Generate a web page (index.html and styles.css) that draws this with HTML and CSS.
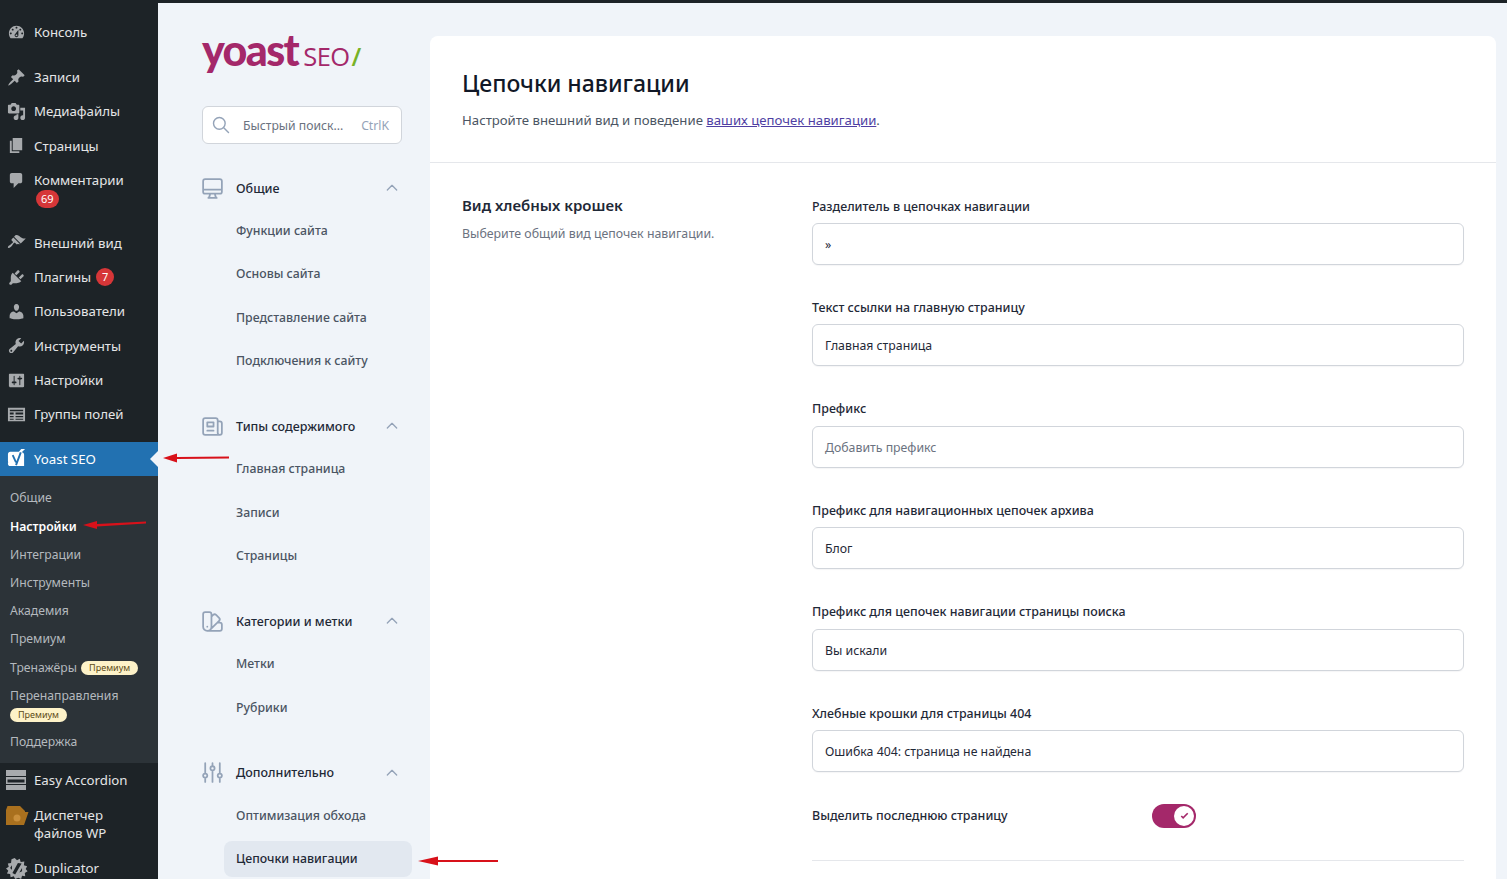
FILE: index.html
```html
<!DOCTYPE html>
<html lang="ru">
<head>
<meta charset="utf-8">
<title>Цепочки навигации</title>
<link rel="stylesheet" href="styles.css">
</head>
<body>
<div class="app">
  <aside class="wp">
    <ul class="wp-menu first">
      <li class="wp-item"><svg class="di" viewBox="0 0 20 20"><path d="M3.76 16h12.48c1.1-1.37 1.76-3.11 1.76-5 0-4.42-3.58-8-8-8s-8 3.58-8 8c0 1.89.66 3.63 1.76 5zM10 4c.55 0 1 .45 1 1s-.45 1-1 1-1-.45-1-1 .45-1 1-1zM6 6c.55 0 1 .45 1 1s-.45 1-1 1-1-.45-1-1 .45-1 1-1zm8 0c.55 0 1 .45 1 1s-.45 1-1 1-1-.45-1-1 .45-1 1-1zm-5.37 5.55L12 7v6c0 1.1-.9 2-2 2s-2-.9-2-2c0-.57.24-1.08.63-1.45zM4 10c.55 0 1 .45 1 1s-.45 1-1 1-1-.45-1-1 .45-1 1-1zm12 0c.55 0 1 .45 1 1s-.45 1-1 1-1-.45-1-1 .45-1 1-1zm-5 3c0-.55-.45-1-1-1s-1 .45-1 1 .45 1 1 1 1-.45 1-1z"/></svg><span>Консоль</span></li>
    </ul>
    <ul class="wp-menu gap">
      <li class="wp-item"><svg class="di" viewBox="0 0 20 20"><path d="M10.44 3.02l1.82-1.82 6.36 6.35-1.83 1.82c-1.05-.68-2.48-.57-3.41.36l-.75.75c-.92.93-1.04 2.35-.35 3.41l-1.83 1.82-2.41-2.41-2.8 2.79c-.42.42-3.38 2.71-3.8 2.29s1.86-3.39 2.28-3.81l2.79-2.79L4.1 9.36l1.83-1.82c1.05.69 2.48.57 3.4-.36l.75-.75c.93-.92 1.05-2.35.36-3.41z"/></svg><span>Записи</span></li>
      <li class="wp-item"><svg class="di" viewBox="0 0 20 20"><path d="M13 11V4c0-.55-.45-1-1-1h-1.67L9 1H5L3.67 3H2c-.55 0-1 .45-1 1v7c0 .55.45 1 1 1h10c.55 0 1-.45 1-1zM7 4.500c1.380 0 2.500 1.120 2.500 2.500S8.380 9.500 7 9.500 4.500 8.380 4.500 7 5.620 4.500 7 4.500zM14 6h5v10.500c0 1.380-1.120 2.500-2.500 2.500S14 17.880 14 16.500s1.120-2.500 2.500-2.500c.17 0 .34.02.5.05V9h-3V6zm-4 8.050V13h2v3.500c0 1.380-1.120 2.500-2.500 2.500S7 17.880 7 16.500 8.120 14 9.500 14c.17 0 .34.02.5.05z"/></svg><span>Медиафайлы</span></li>
      <li class="wp-item"><svg class="di" viewBox="0 0 20 20"><path d="M6 15V2h10v13H6zm-1 1h8v2H3V5h2v11z"/></svg><span>Страницы</span></li>
      <li class="wp-item tall"><svg class="di" viewBox="0 0 20 20"><path d="M5 2h9c1.100 0 2 .9 2 2v7c0 1.100-.9 2-2 2h-2l-5 5v-5H5c-1.100 0-2-.9-2-2V4c0-1.100.9-2 2-2z"/></svg><span class="stack"><span>Комментарии</span><span class="count">69</span></span></li>
    </ul>
    <ul class="wp-menu gap2">
      <li class="wp-item"><svg class="di" viewBox="0 0 20 20"><path d="M14.480 11.060L7.410 3.990l1.500-1.500c.5-.56 2.300-.47 3.510.32 1.210.8 1.430 1.280 2.910 2.100 1.180.64 2.450 1.260 4.450.85zm-.71.71L6.700 4.700 4.930 6.470c-.39.39-.39 1.020 0 1.410l1.060 1.060c.39.39.39 1.030 0 1.420-.6.6-1.430 1.110-2.210 1.690-.35.26-.7.53-1.010.84C1.430 13.230.5 15 1.060 15.560c.56.56 2.330-.37 3.680-1.710.3-.31.58-.66.84-1.010.58-.78 1.090-1.610 1.690-2.210.39-.39 1.030-.39 1.420 0l1.060 1.060c.39.39 1.020.39 1.410 0z"/></svg><span>Внешний вид</span></li>
      <li class="wp-item"><svg class="di" viewBox="0 0 20 20"><path d="M13.110 4.360L9.870 7.600 8 5.730l3.240-3.240c.35-.34 1.050-.2 1.560.32.52.51.66 1.210.31 1.550zm-8 1.770l.91-1.120 9.010 9.010-1.190.84c-.71.71-2.630 1.160-3.820 1.160H6.140L4.900 17.260c-.59.59-1.540.59-2.120 0-.59-.58-.59-1.530 0-2.120l1.240-1.240v-3.880c0-1.130.4-3.190 1.090-3.890zm7.260 3.970l3.240-3.240c.34-.35 1.040-.21 1.550.31.52.51.66 1.210.31 1.550l-3.240 3.250z"/></svg><span>Плагины</span><span class="count inline">7</span></li>
      <li class="wp-item"><svg class="di" viewBox="0 0 20 20"><path d="M10 9.250c-2.270 0-2.730-3.440-2.730-3.440C7 4.020 7.820 2 9.970 2c2.160 0 2.980 2.020 2.710 3.810 0 0-.41 3.440-2.680 3.440zm0 2.570L12.720 10c2.390 0 4.520 2.330 4.520 4.530v2.490s-3.650 1.130-7.240 1.130c-3.650 0-7.240-1.130-7.240-1.130v-2.490c0-2.250 1.940-4.480 4.470-4.480z"/></svg><span>Пользователи</span></li>
      <li class="wp-item"><svg class="di" viewBox="0 0 20 20"><path d="M16.680 9.770c-1.340 1.340-3.300 1.670-4.950.99l-5.410 6.520c-.99.99-2.590.99-3.580 0s-.99-2.590 0-3.570l6.520-5.420c-.68-1.650-.35-3.610.99-4.950 1.280-1.280 3.120-1.620 4.720-1.060l-2.890 2.890 2.820 2.820 2.860-2.870c.53 1.580.18 3.390-1.080 4.650zM3.810 16.210c.4.39 1.040.39 1.430 0 .4-.4.4-1.040 0-1.430-.39-.4-1.030-.4-1.430 0-.39.39-.39 1.030 0 1.430z"/></svg><span>Инструменты</span></li>
      <li class="wp-item"><svg class="di" viewBox="0 0 20 20"><path d="M18 16V4c0-.55-.45-1-1-1H3c-.55 0-1 .45-1 1v12c0 .55.45 1 1 1h14c.55 0 1-.45 1-1zM8 11h1c.55 0 1 .45 1 1s-.45 1-1 1H8v1.500c0 .28-.22.5-.5.5s-.5-.22-.5-.5V13H6c-.55 0-1-.45-1-1s.45-1 1-1h1V5.500c0-.28.22-.5.5-.5s.5.22.5.5V11zm5-2h-1c-.55 0-1-.45-1-1s.45-1 1-1h1V5.500c0-.28.22-.5.5-.5s.5.22.5.5V7h1c.55 0 1 .45 1 1s-.45 1-1 1h-1v5.500c0 .28-.22.5-.5.5s-.5-.22-.5-.5V9z"/></svg><span>Настройки</span></li>
      <li class="wp-item"><svg class="di" viewBox="0 0 20 20"><path fill-rule="evenodd" d="M1 3h18v14H1zM3 5v1.500h14V5zM3 8v2h4V8zm6 0v2h8V8zM3 11.500v1.500h4v-1.500zm6 0v1.500h8v-1.500zM3 14.500V15.500h4v-1zm6 0V15.500h8v-1z"/></svg><span>Группы полей</span></li>
    </ul>
    <div class="wp-active">
      <svg class="di" viewBox="0 0 20 20"><path class="y-bg" d="M3.500 3H12.500L15 0h4L15.500 3.500c1.500.3 2.500 1.200 2.500 2.500V18H8l2-3H3.500C2 15 1 14 1 12.500V5.500C1 4 2 3 3.500 3z"/><path class="y-bg" d="M3 14h10v4H3.500C2 18 1 17 1 15.500V14z"/><path class="y-mark" d="M6 6.500 9.500 14M14.500 3.500 9.500 17"/></svg>
      <span>Yoast SEO</span>
      <i class="notch"></i>
    </div>
    <ul class="wp-sub">
      <li>Общие</li>
      <li class="cur">Настройки</li>
      <li>Интеграции</li>
      <li>Инструменты</li>
      <li>Академия</li>
      <li>Премиум</li>
      <li>Тренажёры <span class="prem">Премиум</span></li>
      <li class="two">Перенаправления<br><span class="prem">Премиум</span></li>
      <li>Поддержка</li>
    </ul>
    <ul class="wp-menu">
      <li class="wp-item"><svg class="di big" viewBox="-1 0 24 20"><path fill-rule="evenodd" d="M0 0h20v6H0zM0 7h20v7H0zM1.500 9.500v3h17v-3zM0 15h20v5H0z"/></svg><span>Easy Accordion</span></li>
      <li class="wp-item files"><svg class="di big" viewBox="0 0 24 20"><path fill="#a9701e" d="M1 4 2.500 0h12.500l5 5v1h3.500L19 19H1z"/><circle cx="12" cy="12" r="3.500" fill="#c98f3c"/></svg><span>Диспетчер<br>файлов WP</span></li>
      <li class="wp-item"><svg class="di big dup" viewBox="0 0 24 24"><path d="M9.500 1 12 3.500 15 2l1 3.500 4-.5-.5 4 3.500 1-1.500 3 2 2.500-3 2 .5 3.500-3.500-.5-1 3.500-3-1.500L10 24l-1.500-3-3.500 1-.5-3.500L1 18l1.500-3L0 12.500 3 10.500 2 7l3.500-.5L6 2.500zM13 6.500 7 17.500l3 1.500 7-12zM6.500 9 4.500 12l2 2zm11 3-3 5 3-1.500z"/></svg><span>Duplicator</span></li>
    </ul>
  </aside>

  <nav class="side">
    <div class="logo"><span class="logo-y">yoast</span><span class="logo-s">SEO</span><span class="logo-g">/</span></div>
    <div class="search">
      <svg class="ic search-ic" viewBox="0 0 24 24"><path d="M21 21l-6-6m2-5a7 7 0 11-14 0 7 7 0 0114 0z"/></svg>
      <span class="search-t">Быстрый поиск...</span>
      <span class="search-k">CtrlK</span>
    </div>

    <section class="grp">
      <h3 class="grp-h"><svg class="ic" viewBox="0 0 24 24"><path d="M9.750 17L9 20l-1 1h8l-1-1-.75-3M3 13h18M5 17h14a2 2 0 002-2V5a2 2 0 00-2-2H5a2 2 0 00-2 2v10a2 2 0 002 2z"/></svg><span>Общие</span><svg class="chev" viewBox="0 0 24 24"><path d="M5 15l7-7 7 7"/></svg></h3>
      <ul class="grp-l"><li>Функции сайта</li><li>Основы сайта</li><li>Представление сайта</li><li>Подключения к сайту</li></ul>
    </section>
    <section class="grp">
      <h3 class="grp-h"><svg class="ic" viewBox="0 0 24 24"><path d="M19 20H5a2 2 0 01-2-2V6a2 2 0 012-2h10a2 2 0 012 2v1m2 13a2 2 0 01-2-2V7m2 13a2 2 0 002-2V9a2 2 0 00-2-2h-2m-4-3H9M7 16h6M7 8h6v4H7V8z"/></svg><span>Типы содержимого</span><svg class="chev" viewBox="0 0 24 24"><path d="M5 15l7-7 7 7"/></svg></h3>
      <ul class="grp-l"><li>Главная страница</li><li>Записи</li><li>Страницы</li></ul>
    </section>
    <section class="grp">
      <h3 class="grp-h"><svg class="ic" viewBox="0 0 24 24"><path d="M7 21a4 4 0 01-4-4V5a2 2 0 012-2h4a2 2 0 012 2v12a4 4 0 01-4 4zm0 0h12a2 2 0 002-2v-4a2 2 0 00-2-2h-2.343M11 7.343l1.657-1.657a2 2 0 012.828 0l2.829 2.829a2 2 0 010 2.828l-8.486 8.485M7 17h.01"/></svg><span>Категории и метки</span><svg class="chev" viewBox="0 0 24 24"><path d="M5 15l7-7 7 7"/></svg></h3>
      <ul class="grp-l"><li>Метки</li><li>Рубрики</li></ul>
    </section>
    <section class="grp">
      <h3 class="grp-h"><svg class="ic" viewBox="0 0 24 24"><path d="M12 6V3m0 3a2 2 0 100 4m0-4a2 2 0 110 4m-7 7a2 2 0 100-4m0 4a2 2 0 110-4m0 4v4m0-8V3m7 7v11m7-4a2 2 0 100-4m0 4a2 2 0 110-4m0 4v4m0-8V3"/></svg><span>Дополнительно</span><svg class="chev" viewBox="0 0 24 24"><path d="M5 15l7-7 7 7"/></svg></h3>
      <ul class="grp-l"><li>Оптимизация обхода</li><li class="on">Цепочки навигации</li></ul>
    </section>
  </nav>

  <main class="card">
    <header class="card-h">
      <h1>Цепочки навигации</h1>
      <p>Настройте внешний вид и поведение <a href="#">ваших цепочек навигации</a>.</p>
    </header>
    <section class="body">
      <div class="intro">
        <h2>Вид хлебных крошек</h2>
        <p>Выберите общий вид цепочек навигации.</p>
      </div>
      <div class="form">
        <div class="field"><label>Разделитель в цепочках навигации</label><div class="input sep">»</div></div>
        <div class="field"><label>Текст ссылки на главную страницу</label><div class="input">Главная страница</div></div>
        <div class="field"><label>Префикс</label><div class="input ph">Добавить префикс</div></div>
        <div class="field"><label>Префикс для навигационных цепочек архива</label><div class="input">Блог</div></div>
        <div class="field"><label>Префикс для цепочек навигации страницы поиска</label><div class="input">Вы искали</div></div>
        <div class="field"><label>Хлебные крошки для страницы 404</label><div class="input">Ошибка 404: страница не найдена</div></div>
        <div class="toggle-row">
          <label>Выделить последнюю страницу</label>
          <span class="toggle"><span class="knob"><svg viewBox="0 0 24 24"><path d="M5 13l4 4L19 7"/></svg></span></span>
        </div>
        <hr class="rule">
      </div>
    </section>
  </main>

  <svg class="arrow a1" viewBox="0 0 66 12"><path d="M0 6 14 1.500V5L66 4.500V6.500L14 7V10.500z"/></svg>
  <svg class="arrow a2" viewBox="0 0 63 12"><path d="M0 7 14 3V6L63 3.500V5.500L14 8.500V11z"/></svg>
  <svg class="arrow a3" viewBox="0 0 80 12"><path d="M0 6 20 1.500V5H80V7H20V10.500z"/></svg>
</div>
</body>
</html>
```
FILE: styles.css
```css
* { box-sizing: border-box; }
html, body { margin: 0; padding: 0; height: 879px; overflow: hidden; }
body { font-family: "Noto Sans", "Open Sans", sans-serif; background: #f0f4f9; color: #1f2937; }
ul { list-style: none; margin: 0; padding: 0; }
h1, h2, h3, p { margin: 0; }

.app { position: relative; display: flex; height: 879px; overflow: hidden; border-top: 3px solid #1d2327; }

/* WordPress menu */
.wp { width: 158px; flex: none; background: #1d2327; color: #e4e5e6; font-size: 13.25px; line-height: 18px; overflow: hidden; }
.wp-menu.first { padding-top: 12px; }
.wp-menu.gap { margin-top: 11px; }
.wp-menu.gap2 { margin-top: 1px; }
.wp-item { display: flex; align-items: center; height: 34.2px; padding-left: 7px; gap: 8px; }
.gap2 .wp-item { height: 34.3px; }
.wp-item.tall { height: 62px; align-items: flex-start; padding-top: 8px; }
.wp-item.files { height: 53.5px; align-items: flex-start; padding-top: 9px; }
.di { width: 19px; height: 19px; flex: none; fill: #a7aaad; }
.y-bg { fill: #fff; }
.y-mark { fill: none; stroke: #2271b1; stroke-width: 2; }
.di.big { width: 24px; height: 20px; margin-left: -2px; margin-right: -3px; }
.di.big.dup { height: 22px; }
.stack { display: flex; flex-direction: column; align-items: flex-start; }
.count { display: inline-block; min-width: 22px; height: 18px; margin-top: 1px; padding: 0 5px; margin-left: 2px; border-radius: 9px; background: #d63638; color: #fff; font-size: 11px; line-height: 18px; text-align: center; }
.count.inline { min-width: 18px; padding: 0; margin: 0 0 0 -3px; }
.wp-active { position: relative; display: flex; align-items: center; gap: 8px; height: 34px; margin-top: 10.4px; padding-left: 7px; background: #2271b1; color: #fff; }
.notch { position: absolute; right: 0; top: 9px; width: 0; height: 0; border: 8px solid transparent; border-right-color: #f0f4f9; border-left: 0; }
.wp-sub { background: #2c3338; color: #b4b9be; font-size: 12.2px; padding: 8.5px 0 0 10px; height: 287px; }
.wp-sub li { min-height: 28.2px; line-height: 28px; white-space: nowrap; }
.wp-sub li.cur { color: #fff; font-weight: 600; }
.wp-sub li.two { line-height: 19px; min-height: 46px; padding-top: 4px; }
.prem { display: inline-block; height: 14px; margin-left: 1px; padding: 0 8px; border-radius: 7px; background: #fdf2c8; color: #5c4a16; font-size: 9px; line-height: 14px; vertical-align: 1px; }
.two .prem { margin-left: 0; }

/* Yoast sub nav */
.side { width: 272px; flex: none; padding: 24px 18px 0 44px; font-size: 12.3px; }
.logo { display: flex; align-items: baseline; height: 54px; white-space: nowrap; }
.logo-y { font-family: Lato, sans-serif; font-weight: 900; font-size: 43px; line-height: 45px; letter-spacing: -1.6px; color: #a4286a; }
.logo-s { margin-left: 5px; font-family: "Open Sans", sans-serif; font-size: 25.5px; letter-spacing: -.6px; color: #a4286a; }
.logo-g { margin-left: 2px; font-family: "Open Sans", sans-serif; font-size: 25px; font-weight: 600; color: #77b227; }
.search { display: flex; align-items: center; width: 200px; height: 38px; margin-top: 25px; padding: 0 12px 0 8px; background: #fff; border: 1px solid #d1d5db; border-radius: 6px; color: #6b7280; font-size: 12.2px; }
.ic.search-ic { width: 20px; height: 20px; margin: 0; }
.search-t { margin-left: 12px; flex: 1; }
.search-k { color: #94a3b8; }
.ic { width: 25px; height: 25px; flex: none; margin: 0 -2.5px; fill: none; stroke: #94a3b8; stroke-width: 1.7; stroke-linecap: round; stroke-linejoin: round; }
.grp-h { display: flex; align-items: center; width: 200px; height: 34px; margin-top: 30.2px; font-size: 12.5px; font-weight: 500; color: #1f2937; }
.grp:first-of-type .grp-h { margin-top: 27px; }
.grp-h span { margin-left: 14px; flex: 1; }
.chev { width: 16px; height: 16px; margin-right: 2px; fill: none; stroke: #94a3b8; stroke-width: 2; stroke-linecap: round; stroke-linejoin: round; }
.grp-l { margin: 7.8px 0 0 22px; width: 188px; color: #4b5563; font-weight: 500; }
.grp-l li { height: 36px; line-height: 36px; padding-left: 12px; border-radius: 8px; margin-bottom: 7.5px; }
.grp-l li:last-child { margin-bottom: 0; }
.grp-l li.on { background: #e2e8f0; color: #1f2937; }

/* Main card */
.card { width: 1066px; flex: none; margin-top: 33px; background: #fff; border-radius: 8px 8px 0 0; }
.card-h { height: 127px; padding: 31px 32px 0; border-bottom: 1px solid #e5e7eb; }
.card-h h1 { font-size: 23px; line-height: 32px; font-weight: 500; color: #111827; }
.card-h p { margin-top: 11px; font-size: 13.2px; line-height: 20px; color: #4b5563; }
.card-h a { color: #4f3fa3; }
.body { display: flex; padding: 32px 32px 0; }
.intro { width: 350px; flex: none; }
.intro h2 { margin-top: -1px; font-size: 15px; line-height: 22px; font-weight: 600; color: #1f2937; }
.intro p { margin-top: 8px; font-size: 12.35px; line-height: 20px; color: #6b7280; }
.form { flex: 1; }
.field { height: 101.45px; }
label { display: block; padding-top: 1.5px; font-size: 12.45px; line-height: 20px; font-weight: 500; color: #1f2937; }
.input { height: 42px; margin-top: 6.5px; padding: 0 12px; border: 1px solid #d1d5db; border-radius: 6px; background: #fff; font-size: 12.3px; line-height: 41px; color: #1f2937; box-shadow: 0 1px 1px rgba(15,23,42,.04); }
.input.ph { color: #6b7280; }
.toggle-row { display: flex; align-items: center; height: 24px; }
.toggle-row label { width: 340px; padding-top: 1px; }
.toggle { display: flex; justify-content: flex-end; align-items: center; width: 44px; height: 24px; padding: 2px; border-radius: 12px; background: #a4286a; }
.knob { display: flex; align-items: center; justify-content: center; width: 20px; height: 20px; border-radius: 50%; background: #fff; }
.knob svg { width: 11px; height: 11px; fill: none; stroke: #a4286a; stroke-width: 3.5; }
.rule { margin: 32px 0 0; border: 0; border-top: 1px solid #e5e7eb; }

/* Annotation arrows */
.arrow { position: absolute; fill: #d8111a; }
.a1 { left: 163px; top: 449px; width: 66px; height: 12px; }
.a2 { left: 83px; top: 515px; width: 63px; height: 12px; }
.a3 { left: 418px; top: 852px; width: 80px; height: 12px; }
```
